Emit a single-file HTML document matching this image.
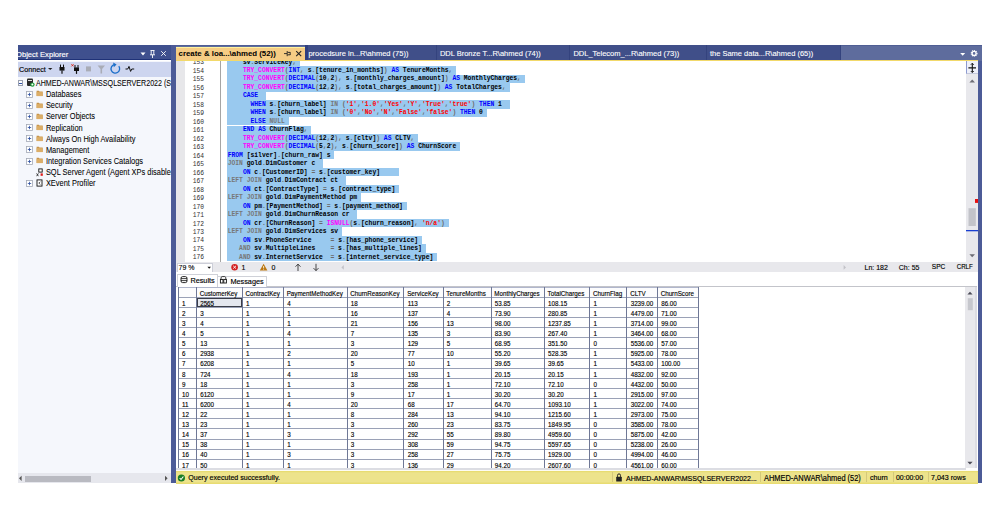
<!DOCTYPE html><html><head><meta charset="utf-8"><style>
*{margin:0;padding:0;box-sizing:border-box}
html,body{width:1000px;height:529px;overflow:hidden;background:#fff;font-family:"Liberation Sans",sans-serif}
.ab{position:absolute}
.t{position:absolute;white-space:pre;line-height:1}
</style></head><body>
<div class="ab" style="left:171px;top:45px;width:811px;height:438.4px;background:#4c5b97"></div>
<div class="ab" style="left:17.6px;top:45px;width:153.6px;height:15.4px;background:#3f508e;overflow:hidden;border-bottom:0.9px solid #1f3278">
<div class="t" style="left:-1.6px;top:6.0px;font-size:7.6px;color:#fff;-webkit-text-stroke:0.15px #fff">Object Explorer</div>
</div>
<svg class="ab" style="left:138px;top:48px" width="34" height="12" viewBox="0 0 34 12"><path d="M2.5 4.5h5l-2.5 3z" fill="#fff"/><path d="M12.5 2.5h4M13.2 2.5v4.2M15.8 2.5v4.2M12 6.8h5M14.5 6.8v3.2" stroke="#fff" stroke-width="0.9" fill="none"/><path d="M23.2 3.2l4.6 4.6M27.8 3.2l-4.6 4.6" stroke="#fff" stroke-width="0.9"/></svg>
<div class="ab" style="left:17.6px;top:60.6px;width:153.6px;height:16.4px;background:#cdd5ef;border-top:1.1px solid #f4f6fc"></div>
<div class="t" style="left:19px;top:66.4px;font-size:7.2px;color:#000;-webkit-text-stroke:0.15px #000">Connect</div>
<svg class="ab" style="left:17.6px;top:60.4px" width="153" height="17" viewBox="0 0 153 17"><path d="M30 7.9h4.4l-2.2 2.1z" fill="#1e1e1e"/><path d="M42.5 4.6v2.6M45.5 4.6v2.6" stroke="#111" stroke-width="1"/><rect x="41.5" y="7" width="5" height="3.6" fill="#111"/><path d="M44 10.5v3.2" stroke="#111" stroke-width="1.2"/><path d="M53.4 4.2l2.2 2.2M55.6 4.2l-2.2 2.2" stroke="#d21" stroke-width="0.9"/><path d="M57 5v2.6M60 5v2.6" stroke="#111" stroke-width="1"/><rect x="56" y="7.4" width="5" height="3.6" fill="#111"/><path d="M58.5 10.9v3" stroke="#111" stroke-width="1.2"/><rect x="68" y="6.4" width="5" height="5" fill="#a9acb6"/><path d="M79.6 5.6h7.4l-2.9 3.4v4.6h-1.6v-4.6z" fill="#a9acb6"/><path d="M96.2 4.6a4.3 4.3 0 1 0 4.6 1.6" stroke="#1c6fc9" stroke-width="1.3" fill="none"/><path d="M95.2 2.6l3.4 2-2.8 2.6z" fill="#1c6fc9"/><path d="M107.5 9h2.3l1.2-2.6 1.6 5 1.2-2.4h2.4" stroke="#111" stroke-width="1" fill="none"/></svg>
<div class="ab" style="left:17.6px;top:77.2px;width:153.6px;height:396px;background:#f5f7fc;overflow:hidden">
<div class="ab" style="left:0.2px;top:3.10px;width:5.4px;height:5.4px;border:0.8px solid #9aa0b0;background:#fff"></div>
<div class="ab" style="left:1.4px;top:5.40px;width:3px;height:0.8px;background:#3355aa"></div>
<svg class="ab" style="left:8px;top:1.20px" width="9" height="9" viewBox="0 0 9 9"><rect x="1" y="0.5" width="6" height="7.5" rx="1" fill="#2a2a2a"/><rect x="2" y="2" width="4" height="1" fill="#ddd"/><circle cx="6.4" cy="6.6" r="2.2" fill="#1a9b3a"/><circle cx="6.4" cy="6.6" r="1" fill="#fff"/></svg>
<div class="t" style="left:18.40px;top:4.30px;font-size:7.12px;color:#000;-webkit-text-stroke:0.05px #000;transform:scaleY(1.15);transform-origin:0 50%">AHMED-ANWAR\MSSQLSERVER2022 (SQL Server 16.0.1000 - AHMED-ANWAR\ahmed)</div>
<svg class="ab" style="left:8.40px;top:13.46px" width="7" height="7" viewBox="0 0 7 7"><rect x="0.5" y="0.5" width="6" height="6" fill="#fff" stroke="#a4a8b6" stroke-width="0.8"/><path d="M1.8 3.5h3.4M3.5 1.8v3.4" stroke="#2c4ea0" stroke-width="0.8"/></svg>
<svg class="ab" style="left:18.40px;top:13.26px" width="8" height="7" viewBox="0 0 8 7"><path d="M0.6 0.8h2.2l0.7 0.7h3.2v4.6h-6.1z" fill="#c8954c"/><rect x="0.6" y="2.1" width="6.1" height="4" fill="#dcae68"/></svg>
<div class="t" style="left:28.30px;top:13.86px;font-size:7.45px;color:#000;-webkit-text-stroke:0.05px #000;transform:scaleY(1.1);transform-origin:0 50%">Databases</div>
<svg class="ab" style="left:8.40px;top:24.62px" width="7" height="7" viewBox="0 0 7 7"><rect x="0.5" y="0.5" width="6" height="6" fill="#fff" stroke="#a4a8b6" stroke-width="0.8"/><path d="M1.8 3.5h3.4M3.5 1.8v3.4" stroke="#2c4ea0" stroke-width="0.8"/></svg>
<svg class="ab" style="left:18.40px;top:24.42px" width="8" height="7" viewBox="0 0 8 7"><path d="M0.6 0.8h2.2l0.7 0.7h3.2v4.6h-6.1z" fill="#c8954c"/><rect x="0.6" y="2.1" width="6.1" height="4" fill="#dcae68"/></svg>
<div class="t" style="left:28.30px;top:25.02px;font-size:7.45px;color:#000;-webkit-text-stroke:0.05px #000;transform:scaleY(1.1);transform-origin:0 50%">Security</div>
<svg class="ab" style="left:8.40px;top:35.78px" width="7" height="7" viewBox="0 0 7 7"><rect x="0.5" y="0.5" width="6" height="6" fill="#fff" stroke="#a4a8b6" stroke-width="0.8"/><path d="M1.8 3.5h3.4M3.5 1.8v3.4" stroke="#2c4ea0" stroke-width="0.8"/></svg>
<svg class="ab" style="left:18.40px;top:35.58px" width="8" height="7" viewBox="0 0 8 7"><path d="M0.6 0.8h2.2l0.7 0.7h3.2v4.6h-6.1z" fill="#c8954c"/><rect x="0.6" y="2.1" width="6.1" height="4" fill="#dcae68"/></svg>
<div class="t" style="left:28.30px;top:36.18px;font-size:7.45px;color:#000;-webkit-text-stroke:0.05px #000;transform:scaleY(1.1);transform-origin:0 50%">Server Objects</div>
<svg class="ab" style="left:8.40px;top:46.94px" width="7" height="7" viewBox="0 0 7 7"><rect x="0.5" y="0.5" width="6" height="6" fill="#fff" stroke="#a4a8b6" stroke-width="0.8"/><path d="M1.8 3.5h3.4M3.5 1.8v3.4" stroke="#2c4ea0" stroke-width="0.8"/></svg>
<svg class="ab" style="left:18.40px;top:46.74px" width="8" height="7" viewBox="0 0 8 7"><path d="M0.6 0.8h2.2l0.7 0.7h3.2v4.6h-6.1z" fill="#c8954c"/><rect x="0.6" y="2.1" width="6.1" height="4" fill="#dcae68"/></svg>
<div class="t" style="left:28.30px;top:47.34px;font-size:7.45px;color:#000;-webkit-text-stroke:0.05px #000;transform:scaleY(1.1);transform-origin:0 50%">Replication</div>
<svg class="ab" style="left:8.40px;top:58.10px" width="7" height="7" viewBox="0 0 7 7"><rect x="0.5" y="0.5" width="6" height="6" fill="#fff" stroke="#a4a8b6" stroke-width="0.8"/><path d="M1.8 3.5h3.4M3.5 1.8v3.4" stroke="#2c4ea0" stroke-width="0.8"/></svg>
<svg class="ab" style="left:18.40px;top:57.90px" width="8" height="7" viewBox="0 0 8 7"><path d="M0.6 0.8h2.2l0.7 0.7h3.2v4.6h-6.1z" fill="#c8954c"/><rect x="0.6" y="2.1" width="6.1" height="4" fill="#dcae68"/></svg>
<div class="t" style="left:28.30px;top:58.50px;font-size:7.45px;color:#000;-webkit-text-stroke:0.05px #000;transform:scaleY(1.1);transform-origin:0 50%">Always On High Availability</div>
<svg class="ab" style="left:8.40px;top:69.26px" width="7" height="7" viewBox="0 0 7 7"><rect x="0.5" y="0.5" width="6" height="6" fill="#fff" stroke="#a4a8b6" stroke-width="0.8"/><path d="M1.8 3.5h3.4M3.5 1.8v3.4" stroke="#2c4ea0" stroke-width="0.8"/></svg>
<svg class="ab" style="left:18.40px;top:69.06px" width="8" height="7" viewBox="0 0 8 7"><path d="M0.6 0.8h2.2l0.7 0.7h3.2v4.6h-6.1z" fill="#c8954c"/><rect x="0.6" y="2.1" width="6.1" height="4" fill="#dcae68"/></svg>
<div class="t" style="left:28.30px;top:69.66px;font-size:7.45px;color:#000;-webkit-text-stroke:0.05px #000;transform:scaleY(1.1);transform-origin:0 50%">Management</div>
<svg class="ab" style="left:8.40px;top:80.42px" width="7" height="7" viewBox="0 0 7 7"><rect x="0.5" y="0.5" width="6" height="6" fill="#fff" stroke="#a4a8b6" stroke-width="0.8"/><path d="M1.8 3.5h3.4M3.5 1.8v3.4" stroke="#2c4ea0" stroke-width="0.8"/></svg>
<svg class="ab" style="left:18.40px;top:80.22px" width="8" height="7" viewBox="0 0 8 7"><path d="M0.6 0.8h2.2l0.7 0.7h3.2v4.6h-6.1z" fill="#c8954c"/><rect x="0.6" y="2.1" width="6.1" height="4" fill="#dcae68"/></svg>
<div class="t" style="left:28.30px;top:80.82px;font-size:7.45px;color:#000;-webkit-text-stroke:0.05px #000;transform:scaleY(1.1);transform-origin:0 50%">Integration Services Catalogs</div>
<svg class="ab" style="left:18.00px;top:90.78px" width="9" height="9" viewBox="0 0 9 9"><rect x="2.8" y="0.9" width="3.4" height="3.2" fill="#fff" stroke="#111" stroke-width="0.9"/><path d="M0.6 5.4l1.8 2.8M2.4 5.4l-1.8 2.8" stroke="#222" stroke-width="0.8"/><rect x="4.6" y="5.4" width="2.2" height="2.4" fill="#e01818"/></svg>
<div class="t" style="left:28.30px;top:91.98px;font-size:7.45px;color:#000;-webkit-text-stroke:0.05px #000;transform:scaleY(1.1);transform-origin:0 50%">SQL Server Agent (Agent XPs disabled)</div>
<svg class="ab" style="left:8.40px;top:102.74px" width="7" height="7" viewBox="0 0 7 7"><rect x="0.5" y="0.5" width="6" height="6" fill="#fff" stroke="#a4a8b6" stroke-width="0.8"/><path d="M1.8 3.5h3.4M3.5 1.8v3.4" stroke="#2c4ea0" stroke-width="0.8"/></svg>
<svg class="ab" style="left:18.00px;top:102.14px" width="9" height="9" viewBox="0 0 9 9"><rect x="1" y="0.9" width="5" height="6.2" fill="#fff" stroke="#111" stroke-width="0.9"/><path d="M4.4 2.8l-1.6 1.3 1.6 1.3" stroke="#222" stroke-width="0.7" fill="none"/></svg>
<div class="t" style="left:28.30px;top:103.14px;font-size:7.45px;color:#000;-webkit-text-stroke:0.05px #000;transform:scaleY(1.1);transform-origin:0 50%">XEvent Profiler</div>
</div>
<div class="ab" style="left:17.6px;top:473.2px;width:153.6px;height:10.3px;background:#e6e7ed"></div>
<div class="ab" style="left:25px;top:475.6px;width:66px;height:6.2px;background:#b9bac1"></div>
<svg class="ab" style="left:17.6px;top:473.2px" width="154" height="11" viewBox="0 0 154 11"><path d="M1 5.3l2.6-2.6v5.2z" fill="#555"/><path d="M149.6 5.3l-2.6-2.6v5.2z" fill="#555"/></svg>
<div class="ab" style="left:176px;top:45px;width:806px;height:15.5px;background:#5e6c9d;border-top:1.4px solid #4f5e94"></div>
<div class="ab" style="left:305px;top:45px;width:131.5px;height:15.5px;background:#404f89;border-right:0.9px solid #34437e"></div>
<div class="t" style="left:308.4px;top:50.0px;font-size:7.5px;color:#fff;-webkit-text-stroke:0.1px #fff">procedsure in...R\ahmed (75))</div>
<div class="ab" style="left:436.5px;top:45px;width:133.5px;height:15.5px;background:#404f89;border-right:0.9px solid #34437e"></div>
<div class="t" style="left:439.9px;top:50.0px;font-size:7.5px;color:#fff;-webkit-text-stroke:0.1px #fff">DDL Bronze T...R\ahmed (74))</div>
<div class="ab" style="left:570px;top:45px;width:136.5px;height:15.5px;background:#404f89;border-right:0.9px solid #34437e"></div>
<div class="t" style="left:573.4px;top:50.0px;font-size:7.5px;color:#fff;-webkit-text-stroke:0.1px #fff">DDL_Telecom_...R\ahmed (73))</div>
<div class="ab" style="left:706.5px;top:45px;width:134.5px;height:15.5px;background:#404f89;border-right:0.9px solid #34437e"></div>
<div class="t" style="left:709.9px;top:50.0px;font-size:7.5px;color:#fff;-webkit-text-stroke:0.1px #fff">the Same data...R\ahmed (65))</div>
<div class="ab" style="left:176px;top:46.5px;width:129px;height:14.5px;background:#f5cc84;border-top:1.2px solid #fff29d"></div>
<div class="t" style="left:178.6px;top:49.8px;font-size:7.85px;font-weight:bold;color:#000">create &amp; loa...\ahmed (52))</div>
<svg class="ab" style="left:282px;top:48px" width="22" height="11" viewBox="0 0 22 11"><path d="M2 5.6h3M5.2 3v5.2M5.6 4.4h2.6M5.6 6.8h2.6M8.2 4.2v2.8" stroke="#222" stroke-width="0.9" fill="none"/><path d="M14.2 3.2l5 5M19.2 3.2l-5 5" stroke="#222" stroke-width="1.1"/></svg>
<div class="ab" style="left:305.4px;top:45px;width:2.4px;height:15px;background:#2f3f7e"></div>
<svg class="ab" style="left:958px;top:48px" width="22" height="11" viewBox="0 0 22 11"><path d="M2.2 5h5l-2.5 2.8z" fill="#fff"/><circle cx="16.1" cy="5.4" r="2" fill="none" stroke="#fff" stroke-width="1.3"/><circle cx="16.1" cy="5.4" r="2.9" fill="none" stroke="#fff" stroke-width="1.1" stroke-dasharray="1 0.9"/></svg>
<div class="ab" style="left:176px;top:60.5px;width:802px;height:201.5px;background:#fff;overflow:hidden">
<div class="ab" style="left:0;top:0;width:9px;height:202px;background:#e7e7ea"></div>
<div class="ab" style="left:44px;top:0;width:0.8px;height:202px;background:#a5a5a5"></div>
</div>
<div class="ab" style="left:176px;top:59.6px;width:802px;height:0.8px;background:#2d4a9e"></div>
<div class="ab" style="left:176px;top:60.3px;width:802px;height:1.1px;background:#f2d96a"></div>
<div class="ab" style="left:176px;top:61px;width:790px;height:201px;overflow:hidden">
<div class="ab" style="left:51.00px;top:-3.34px;width:73.05px;height:8.48px;background:#99c9ef"></div>
<div class="t" style="left:8.00px;width:20px;text-align:right;top:-0.60px;font-family:'Liberation Mono', monospace;font-size:6.27px;color:#2e2e2e">153</div>
<div class="t" style="left:51.66px;top:-1.50px;font-family:'Liberation Mono', monospace;font-size:6.35px;letter-spacing:0.000px;font-weight:bold">    <span style="color:#000000">sv</span><span style="color:#6a6a6a">.</span><span style="color:#000000">ServiceKey</span><span style="color:#6a6a6a">,</span></div>
<div class="ab" style="left:51.00px;top:5.14px;width:229.26px;height:8.48px;background:#99c9ef"></div>
<div class="t" style="left:8.00px;width:20px;text-align:right;top:7.88px;font-family:'Liberation Mono', monospace;font-size:6.27px;color:#2e2e2e">154</div>
<div class="t" style="left:51.66px;top:6.98px;font-family:'Liberation Mono', monospace;font-size:6.35px;letter-spacing:0.000px;font-weight:bold">    <span style="color:#ff00ff">TRY_CONVERT</span><span style="color:#6a6a6a">(</span><span style="color:#0000ff">INT</span><span style="color:#6a6a6a">,</span> <span style="color:#000000">s</span><span style="color:#6a6a6a">.</span><span style="color:#000000">[tenure_in_months]</span><span style="color:#6a6a6a">)</span> <span style="color:#0000ff">AS</span> <span style="color:#000000">TenureMonths</span><span style="color:#6a6a6a">,</span></div>
<div class="ab" style="left:51.00px;top:13.62px;width:297.84px;height:8.48px;background:#99c9ef"></div>
<div class="t" style="left:8.00px;width:20px;text-align:right;top:16.36px;font-family:'Liberation Mono', monospace;font-size:6.27px;color:#2e2e2e">155</div>
<div class="t" style="left:51.66px;top:15.46px;font-family:'Liberation Mono', monospace;font-size:6.35px;letter-spacing:0.000px;font-weight:bold">    <span style="color:#ff00ff">TRY_CONVERT</span><span style="color:#6a6a6a">(</span><span style="color:#0000ff">DECIMAL</span><span style="color:#6a6a6a">(</span><span style="color:#000000">10</span><span style="color:#6a6a6a">,</span><span style="color:#000000">2</span><span style="color:#6a6a6a">)</span><span style="color:#6a6a6a">,</span> <span style="color:#000000">s</span><span style="color:#6a6a6a">.</span><span style="color:#000000">[monthly_charges_amount]</span><span style="color:#6a6a6a">)</span> <span style="color:#0000ff">AS</span> <span style="color:#000000">MonthlyCharges</span><span style="color:#6a6a6a">,</span></div>
<div class="ab" style="left:51.00px;top:22.10px;width:282.60px;height:8.48px;background:#99c9ef"></div>
<div class="t" style="left:8.00px;width:20px;text-align:right;top:24.84px;font-family:'Liberation Mono', monospace;font-size:6.27px;color:#2e2e2e">156</div>
<div class="t" style="left:51.66px;top:23.94px;font-family:'Liberation Mono', monospace;font-size:6.35px;letter-spacing:0.000px;font-weight:bold">    <span style="color:#ff00ff">TRY_CONVERT</span><span style="color:#6a6a6a">(</span><span style="color:#0000ff">DECIMAL</span><span style="color:#6a6a6a">(</span><span style="color:#000000">12</span><span style="color:#6a6a6a">,</span><span style="color:#000000">2</span><span style="color:#6a6a6a">)</span><span style="color:#6a6a6a">,</span> <span style="color:#000000">s</span><span style="color:#6a6a6a">.</span><span style="color:#000000">[total_charges_amount]</span><span style="color:#6a6a6a">)</span> <span style="color:#0000ff">AS</span> <span style="color:#000000">TotalCharges</span><span style="color:#6a6a6a">,</span></div>
<div class="ab" style="left:51.00px;top:30.58px;width:38.76px;height:8.48px;background:#99c9ef"></div>
<div class="t" style="left:8.00px;width:20px;text-align:right;top:33.32px;font-family:'Liberation Mono', monospace;font-size:6.27px;color:#2e2e2e">157</div>
<div class="t" style="left:51.66px;top:32.42px;font-family:'Liberation Mono', monospace;font-size:6.35px;letter-spacing:0.000px;font-weight:bold">    <span style="color:#0000ff">CASE</span></div>
<div class="ab" style="left:51.00px;top:39.06px;width:282.60px;height:8.48px;background:#99c9ef"></div>
<div class="t" style="left:8.00px;width:20px;text-align:right;top:41.80px;font-family:'Liberation Mono', monospace;font-size:6.27px;color:#2e2e2e">158</div>
<div class="t" style="left:51.66px;top:40.90px;font-family:'Liberation Mono', monospace;font-size:6.35px;letter-spacing:0.000px;font-weight:bold">      <span style="color:#0000ff">WHEN</span> <span style="color:#000000">s</span><span style="color:#6a6a6a">.</span><span style="color:#000000">[churn_label]</span> <span style="color:#777777">IN</span> <span style="color:#6a6a6a">(</span><span style="color:#ff0000">&#x27;1&#x27;</span><span style="color:#6a6a6a">,</span><span style="color:#ff0000">&#x27;1.0&#x27;</span><span style="color:#6a6a6a">,</span><span style="color:#ff0000">&#x27;Yes&#x27;</span><span style="color:#6a6a6a">,</span><span style="color:#ff0000">&#x27;Y&#x27;</span><span style="color:#6a6a6a">,</span><span style="color:#ff0000">&#x27;True&#x27;</span><span style="color:#6a6a6a">,</span><span style="color:#ff0000">&#x27;true&#x27;</span><span style="color:#6a6a6a">)</span> <span style="color:#0000ff">THEN</span> <span style="color:#000000">1</span></div>
<div class="ab" style="left:51.00px;top:47.54px;width:259.74px;height:8.48px;background:#99c9ef"></div>
<div class="t" style="left:8.00px;width:20px;text-align:right;top:50.28px;font-family:'Liberation Mono', monospace;font-size:6.27px;color:#2e2e2e">159</div>
<div class="t" style="left:51.66px;top:49.38px;font-family:'Liberation Mono', monospace;font-size:6.35px;letter-spacing:0.000px;font-weight:bold">      <span style="color:#0000ff">WHEN</span> <span style="color:#000000">s</span><span style="color:#6a6a6a">.</span><span style="color:#000000">[churn_label]</span> <span style="color:#777777">IN</span> <span style="color:#6a6a6a">(</span><span style="color:#ff0000">&#x27;0&#x27;</span><span style="color:#6a6a6a">,</span><span style="color:#ff0000">&#x27;No&#x27;</span><span style="color:#6a6a6a">,</span><span style="color:#ff0000">&#x27;N&#x27;</span><span style="color:#6a6a6a">,</span><span style="color:#ff0000">&#x27;False&#x27;</span><span style="color:#6a6a6a">,</span><span style="color:#ff0000">&#x27;false&#x27;</span><span style="color:#6a6a6a">)</span> <span style="color:#0000ff">THEN</span> <span style="color:#000000">0</span></div>
<div class="ab" style="left:51.00px;top:56.02px;width:61.62px;height:8.48px;background:#99c9ef"></div>
<div class="t" style="left:8.00px;width:20px;text-align:right;top:58.76px;font-family:'Liberation Mono', monospace;font-size:6.27px;color:#2e2e2e">160</div>
<div class="t" style="left:51.66px;top:57.86px;font-family:'Liberation Mono', monospace;font-size:6.35px;letter-spacing:0.000px;font-weight:bold">      <span style="color:#0000ff">ELSE</span> <span style="color:#777777">NULL</span></div>
<div class="ab" style="left:51.00px;top:64.50px;width:84.48px;height:8.48px;background:#99c9ef"></div>
<div class="t" style="left:8.00px;width:20px;text-align:right;top:67.24px;font-family:'Liberation Mono', monospace;font-size:6.27px;color:#2e2e2e">161</div>
<div class="t" style="left:51.66px;top:66.34px;font-family:'Liberation Mono', monospace;font-size:6.35px;letter-spacing:0.000px;font-weight:bold">    <span style="color:#0000ff">END</span> <span style="color:#0000ff">AS</span> <span style="color:#000000">ChurnFlag</span><span style="color:#6a6a6a">,</span></div>
<div class="ab" style="left:51.00px;top:72.98px;width:191.16px;height:8.48px;background:#99c9ef"></div>
<div class="t" style="left:8.00px;width:20px;text-align:right;top:75.72px;font-family:'Liberation Mono', monospace;font-size:6.27px;color:#2e2e2e">162</div>
<div class="t" style="left:51.66px;top:74.82px;font-family:'Liberation Mono', monospace;font-size:6.35px;letter-spacing:0.000px;font-weight:bold">    <span style="color:#ff00ff">TRY_CONVERT</span><span style="color:#6a6a6a">(</span><span style="color:#0000ff">DECIMAL</span><span style="color:#6a6a6a">(</span><span style="color:#000000">12</span><span style="color:#6a6a6a">,</span><span style="color:#000000">2</span><span style="color:#6a6a6a">)</span><span style="color:#6a6a6a">,</span> <span style="color:#000000">s</span><span style="color:#6a6a6a">.</span><span style="color:#000000">[cltv]</span><span style="color:#6a6a6a">)</span> <span style="color:#0000ff">AS</span> <span style="color:#000000">CLTV</span><span style="color:#6a6a6a">,</span></div>
<div class="ab" style="left:51.00px;top:81.46px;width:233.07px;height:8.48px;background:#99c9ef"></div>
<div class="t" style="left:8.00px;width:20px;text-align:right;top:84.20px;font-family:'Liberation Mono', monospace;font-size:6.27px;color:#2e2e2e">163</div>
<div class="t" style="left:51.66px;top:83.30px;font-family:'Liberation Mono', monospace;font-size:6.35px;letter-spacing:0.000px;font-weight:bold">    <span style="color:#ff00ff">TRY_CONVERT</span><span style="color:#6a6a6a">(</span><span style="color:#0000ff">DECIMAL</span><span style="color:#6a6a6a">(</span><span style="color:#000000">5</span><span style="color:#6a6a6a">,</span><span style="color:#000000">2</span><span style="color:#6a6a6a">)</span><span style="color:#6a6a6a">,</span> <span style="color:#000000">s</span><span style="color:#6a6a6a">.</span><span style="color:#000000">[churn_score]</span><span style="color:#6a6a6a">)</span> <span style="color:#0000ff">AS</span> <span style="color:#000000">ChurnScore</span></div>
<div class="ab" style="left:51.00px;top:89.94px;width:107.34px;height:8.48px;background:#99c9ef"></div>
<div class="t" style="left:8.00px;width:20px;text-align:right;top:92.68px;font-family:'Liberation Mono', monospace;font-size:6.27px;color:#2e2e2e">164</div>
<div class="t" style="left:51.66px;top:91.78px;font-family:'Liberation Mono', monospace;font-size:6.35px;letter-spacing:0.000px;font-weight:bold"><span style="color:#0000ff">FROM</span> <span style="color:#000000">[silver]</span><span style="color:#6a6a6a">.</span><span style="color:#000000">[churn_raw]</span> <span style="color:#000000">s</span></div>
<div class="ab" style="left:51.00px;top:98.42px;width:95.91px;height:8.48px;background:#99c9ef"></div>
<div class="t" style="left:8.00px;width:20px;text-align:right;top:101.16px;font-family:'Liberation Mono', monospace;font-size:6.27px;color:#2e2e2e">165</div>
<div class="t" style="left:51.66px;top:100.26px;font-family:'Liberation Mono', monospace;font-size:6.35px;letter-spacing:0.000px;font-weight:bold"><span style="color:#777777">JOIN</span> <span style="color:#000000">gold</span><span style="color:#6a6a6a">.</span><span style="color:#000000">DimCustomer</span> <span style="color:#000000">c</span></div>
<div class="ab" style="left:51.00px;top:106.90px;width:172.11px;height:8.48px;background:#99c9ef"></div>
<div class="t" style="left:8.00px;width:20px;text-align:right;top:109.64px;font-family:'Liberation Mono', monospace;font-size:6.27px;color:#2e2e2e">166</div>
<div class="t" style="left:51.66px;top:108.74px;font-family:'Liberation Mono', monospace;font-size:6.35px;letter-spacing:0.000px;font-weight:bold">    <span style="color:#0000ff">ON</span> <span style="color:#000000">c</span><span style="color:#6a6a6a">.</span><span style="color:#000000">[CustomerID]</span> <span style="color:#6a6a6a">=</span> <span style="color:#000000">s</span><span style="color:#6a6a6a">.</span><span style="color:#000000">[customer_key]</span></div>
<div class="ab" style="left:51.00px;top:115.38px;width:118.77px;height:8.48px;background:#99c9ef"></div>
<div class="t" style="left:8.00px;width:20px;text-align:right;top:118.12px;font-family:'Liberation Mono', monospace;font-size:6.27px;color:#2e2e2e">167</div>
<div class="t" style="left:51.66px;top:117.22px;font-family:'Liberation Mono', monospace;font-size:6.35px;letter-spacing:0.000px;font-weight:bold"><span style="color:#777777">LEFT</span> <span style="color:#777777">JOIN</span> <span style="color:#000000">gold</span><span style="color:#6a6a6a">.</span><span style="color:#000000">DimContract</span> <span style="color:#000000">ct</span></div>
<div class="ab" style="left:51.00px;top:123.86px;width:172.11px;height:8.48px;background:#99c9ef"></div>
<div class="t" style="left:8.00px;width:20px;text-align:right;top:126.60px;font-family:'Liberation Mono', monospace;font-size:6.27px;color:#2e2e2e">168</div>
<div class="t" style="left:51.66px;top:125.70px;font-family:'Liberation Mono', monospace;font-size:6.35px;letter-spacing:0.000px;font-weight:bold">    <span style="color:#0000ff">ON</span> <span style="color:#000000">ct</span><span style="color:#6a6a6a">.</span><span style="color:#000000">[ContractType]</span> <span style="color:#6a6a6a">=</span> <span style="color:#000000">s</span><span style="color:#6a6a6a">.</span><span style="color:#000000">[contract_type]</span></div>
<div class="ab" style="left:51.00px;top:132.34px;width:134.01px;height:8.48px;background:#99c9ef"></div>
<div class="t" style="left:8.00px;width:20px;text-align:right;top:135.08px;font-family:'Liberation Mono', monospace;font-size:6.27px;color:#2e2e2e">169</div>
<div class="t" style="left:51.66px;top:134.18px;font-family:'Liberation Mono', monospace;font-size:6.35px;letter-spacing:0.000px;font-weight:bold"><span style="color:#777777">LEFT</span> <span style="color:#777777">JOIN</span> <span style="color:#000000">gold</span><span style="color:#6a6a6a">.</span><span style="color:#000000">DimPaymentMethod</span> <span style="color:#000000">pm</span></div>
<div class="ab" style="left:51.00px;top:140.82px;width:179.73px;height:8.48px;background:#99c9ef"></div>
<div class="t" style="left:8.00px;width:20px;text-align:right;top:143.56px;font-family:'Liberation Mono', monospace;font-size:6.27px;color:#2e2e2e">170</div>
<div class="t" style="left:51.66px;top:142.66px;font-family:'Liberation Mono', monospace;font-size:6.35px;letter-spacing:0.000px;font-weight:bold">    <span style="color:#0000ff">ON</span> <span style="color:#000000">pm</span><span style="color:#6a6a6a">.</span><span style="color:#000000">[PaymentMethod]</span> <span style="color:#6a6a6a">=</span> <span style="color:#000000">s</span><span style="color:#6a6a6a">.</span><span style="color:#000000">[payment_method]</span></div>
<div class="ab" style="left:51.00px;top:149.30px;width:130.20px;height:8.48px;background:#99c9ef"></div>
<div class="t" style="left:8.00px;width:20px;text-align:right;top:152.04px;font-family:'Liberation Mono', monospace;font-size:6.27px;color:#2e2e2e">171</div>
<div class="t" style="left:51.66px;top:151.14px;font-family:'Liberation Mono', monospace;font-size:6.35px;letter-spacing:0.000px;font-weight:bold"><span style="color:#777777">LEFT</span> <span style="color:#777777">JOIN</span> <span style="color:#000000">gold</span><span style="color:#6a6a6a">.</span><span style="color:#000000">DimChurnReason</span> <span style="color:#000000">cr</span></div>
<div class="ab" style="left:51.00px;top:157.78px;width:221.64px;height:8.48px;background:#99c9ef"></div>
<div class="t" style="left:8.00px;width:20px;text-align:right;top:160.52px;font-family:'Liberation Mono', monospace;font-size:6.27px;color:#2e2e2e">172</div>
<div class="t" style="left:51.66px;top:159.62px;font-family:'Liberation Mono', monospace;font-size:6.35px;letter-spacing:0.000px;font-weight:bold">    <span style="color:#0000ff">ON</span> <span style="color:#000000">cr</span><span style="color:#6a6a6a">.</span><span style="color:#000000">[ChurnReason]</span> <span style="color:#6a6a6a">=</span> <span style="color:#ff00ff">ISNULL</span><span style="color:#6a6a6a">(</span><span style="color:#000000">s</span><span style="color:#6a6a6a">.</span><span style="color:#000000">[churn_reason]</span><span style="color:#6a6a6a">,</span> <span style="color:#ff0000">&#x27;n/a&#x27;</span><span style="color:#6a6a6a">)</span></div>
<div class="ab" style="left:51.00px;top:166.26px;width:114.96px;height:8.48px;background:#99c9ef"></div>
<div class="t" style="left:8.00px;width:20px;text-align:right;top:169.00px;font-family:'Liberation Mono', monospace;font-size:6.27px;color:#2e2e2e">173</div>
<div class="t" style="left:51.66px;top:168.10px;font-family:'Liberation Mono', monospace;font-size:6.35px;letter-spacing:0.000px;font-weight:bold"><span style="color:#777777">LEFT</span> <span style="color:#777777">JOIN</span> <span style="color:#000000">gold</span><span style="color:#6a6a6a">.</span><span style="color:#000000">DimServices</span> <span style="color:#000000">sv</span></div>
<div class="ab" style="left:51.00px;top:174.74px;width:194.97px;height:8.48px;background:#99c9ef"></div>
<div class="t" style="left:8.00px;width:20px;text-align:right;top:177.48px;font-family:'Liberation Mono', monospace;font-size:6.27px;color:#2e2e2e">174</div>
<div class="t" style="left:51.66px;top:176.58px;font-family:'Liberation Mono', monospace;font-size:6.35px;letter-spacing:0.000px;font-weight:bold">    <span style="color:#0000ff">ON</span> <span style="color:#000000">sv</span><span style="color:#6a6a6a">.</span><span style="color:#000000">PhoneService</span>     <span style="color:#6a6a6a">=</span> <span style="color:#000000">s</span><span style="color:#6a6a6a">.</span><span style="color:#000000">[has_phone_service]</span></div>
<div class="ab" style="left:51.00px;top:183.22px;width:198.78px;height:8.48px;background:#99c9ef"></div>
<div class="t" style="left:8.00px;width:20px;text-align:right;top:185.96px;font-family:'Liberation Mono', monospace;font-size:6.27px;color:#2e2e2e">175</div>
<div class="t" style="left:51.66px;top:185.06px;font-family:'Liberation Mono', monospace;font-size:6.35px;letter-spacing:0.000px;font-weight:bold">   <span style="color:#777777">AND</span> <span style="color:#000000">sv</span><span style="color:#6a6a6a">.</span><span style="color:#000000">MultipleLines</span>    <span style="color:#6a6a6a">=</span> <span style="color:#000000">s</span><span style="color:#6a6a6a">.</span><span style="color:#000000">[has_multiple_lines]</span></div>
<div class="ab" style="left:51.00px;top:191.70px;width:210.21px;height:8.48px;background:#99c9ef"></div>
<div class="t" style="left:8.00px;width:20px;text-align:right;top:194.44px;font-family:'Liberation Mono', monospace;font-size:6.27px;color:#2e2e2e">176</div>
<div class="t" style="left:51.66px;top:193.54px;font-family:'Liberation Mono', monospace;font-size:6.35px;letter-spacing:0.000px;font-weight:bold">   <span style="color:#777777">AND</span> <span style="color:#000000">sv</span><span style="color:#6a6a6a">.</span><span style="color:#000000">InternetService</span>  <span style="color:#6a6a6a">=</span> <span style="color:#000000">s</span><span style="color:#6a6a6a">.</span><span style="color:#000000">[internet_service_type]</span></div>
</div>
<div class="ab" style="left:966px;top:61px;width:12px;height:201px;background:#e8e8ec"></div>
<div class="ab" style="left:966.4px;top:61px;width:11.6px;height:13.3px;background:#eef0fa;border-left:0.9px solid #8d9bd0;border-bottom:0.8px solid #c5c9dc"></div>
<svg class="ab" style="left:966px;top:61px" width="12" height="201" viewBox="0 0 12 201"><path d="M6.3 2.6v8.6M2.4 6.9h7.6" stroke="#111" stroke-width="1.1"/><path d="M4.8 3.8l1.5-1.6 1.5 1.6M4.8 10l1.5 1.6 1.5-1.6" stroke="#111" stroke-width="0.9" fill="none"/><path d="M3.4 21.6h5.6l-2.8-3z" fill="#6d6d75"/><path d="M3.4 193.2h5.6l-2.8 3z" fill="#6d6d75"/><rect x="2.5" y="147.2" width="7.3" height="17.8" fill="#c2c3c9"/><rect x="9" y="138" width="3" height="3.9" fill="#e81010"/><rect x="0" y="169" width="12" height="1.3" fill="#1a3fd0"/></svg>
<div class="ab" style="left:176px;top:261.5px;width:802px;height:10.4px;background:#e8e8ec"></div>
<div class="ab" style="left:177px;top:262.6px;width:36px;height:10px;background:#fff;border:0.8px solid #ccced8"></div>
<div class="t" style="left:178.5px;top:263.6px;font-size:7px;color:#000;-webkit-text-stroke:0.12px #000">79 %</div>
<svg class="ab" style="left:176px;top:262px" width="802" height="11" viewBox="0 0 802 11"><path d="M31.4 4.8h3.6l-1.8 2z" fill="#111"/><circle cx="58.6" cy="5.2" r="3.3" fill="#d32222"/><path d="M57.2 3.8l2.8 2.8M60 3.8l-2.8 2.8" stroke="#fff" stroke-width="0.9"/><path d="M87.6 1.8l3.8 6.8h-7.6z" fill="#bb7812"/><path d="M87.6 4v2.4M87.6 7.2v.6" stroke="#fff" stroke-width="0.8"/><path d="M122 9V2.2M119.5 4.7L122 2.2l2.5 2.5" stroke="#111" stroke-width="0.75" fill="none"/><path d="M140 1.8v6.8M137.5 6.1L140 8.6l2.5-2.5" stroke="#111" stroke-width="0.75" fill="none"/><path d="M165.4 5.4l2.4-2.4v4.8z" fill="#c2c2c8"/><path d="M670 5.4l-2.4-2.4v4.8z" fill="#c2c2c8"/></svg>
<div class="t" style="left:241.6px;top:263.8px;font-size:7px;color:#000;-webkit-text-stroke:0.12px #000">1</div>
<div class="t" style="left:271.4px;top:263.8px;font-size:7px;color:#000;-webkit-text-stroke:0.12px #000">0</div>
<div class="t" style="left:864.5px;top:263.8px;font-size:7px;color:#000;-webkit-text-stroke:0.12px #000;transform:scaleY(1.08);transform-origin:0 50%">Ln: 182</div>
<div class="t" style="left:898.8px;top:263.8px;font-size:7px;color:#000;-webkit-text-stroke:0.12px #000;transform:scaleY(1.08);transform-origin:0 50%">Ch: 55</div>
<div class="t" style="left:931.8px;top:263.8px;font-size:6.6px;color:#000;-webkit-text-stroke:0.12px #000;transform:scaleY(1.08);transform-origin:0 50%">SPC</div>
<div class="t" style="left:956.7px;top:263.8px;font-size:6.2px;color:#000;-webkit-text-stroke:0.12px #000;transform:scaleY(1.08);transform-origin:0 50%">CRLF</div>
<div class="ab" style="left:176px;top:271.6px;width:802px;height:198.4px;background:#fff"></div>
<div class="ab" style="left:176px;top:286.1px;width:801px;height:1.3px;background:#c3c4ca"></div>
<div class="ab" style="left:217.3px;top:275.5px;width:49.3px;height:11px;background:#fff;border:0.8px solid #cfd1d8;border-bottom:none"></div>
<div class="ab" style="left:177px;top:274.4px;width:40.6px;height:13px;background:#fff;border:0.8px solid #cfd1d8;border-bottom:none"></div>
<svg class="ab" style="left:176px;top:270px" width="100" height="20" viewBox="0 0 100 20"><rect x="5" y="6.6" width="6" height="6" rx="1.6" fill="none" stroke="#111" stroke-width="0.9"/><path d="M5 8.6h6M5 10.6h6" stroke="#111" stroke-width="0.8"/><rect x="44.4" y="9.4" width="2.6" height="3.6" fill="none" stroke="#111" stroke-width="0.9"/><rect x="47.8" y="9.4" width="2.6" height="3.6" fill="none" stroke="#111" stroke-width="0.9"/><path d="M45 9.4V7.4l1.2-0.8h2.6l1 0.8v2" stroke="#111" stroke-width="0.8" fill="none"/></svg>
<div class="t" style="left:190.4px;top:277.0px;font-size:7.3px;color:#000;-webkit-text-stroke:0.15px #000">Results</div>
<div class="t" style="left:230.4px;top:278.0px;font-size:7.3px;color:#000;-webkit-text-stroke:0.15px #000">Messages</div>
<div class="ab" style="left:176px;top:287px;width:790px;height:183px;overflow:hidden">
<div class="ab" style="left:2.1999999999999886px;top:0;width:520.7px;height:10.4px;background:#fcfcfd"></div>
<div class="ab" style="left:2.20px;top:9.90px;width:520.70px;height:1px;background:#9aa1b6"></div>
<div class="ab" style="left:2.20px;top:20.02px;width:520.70px;height:1px;background:#9aa1b6"></div>
<div class="ab" style="left:2.20px;top:30.14px;width:520.70px;height:1px;background:#9aa1b6"></div>
<div class="ab" style="left:2.20px;top:40.26px;width:520.70px;height:1px;background:#9aa1b6"></div>
<div class="ab" style="left:2.20px;top:50.38px;width:520.70px;height:1px;background:#9aa1b6"></div>
<div class="ab" style="left:2.20px;top:60.50px;width:520.70px;height:1px;background:#9aa1b6"></div>
<div class="ab" style="left:2.20px;top:70.62px;width:520.70px;height:1px;background:#9aa1b6"></div>
<div class="ab" style="left:2.20px;top:80.74px;width:520.70px;height:1px;background:#9aa1b6"></div>
<div class="ab" style="left:2.20px;top:90.86px;width:520.70px;height:1px;background:#9aa1b6"></div>
<div class="ab" style="left:2.20px;top:100.98px;width:520.70px;height:1px;background:#9aa1b6"></div>
<div class="ab" style="left:2.20px;top:111.10px;width:520.70px;height:1px;background:#9aa1b6"></div>
<div class="ab" style="left:2.20px;top:121.22px;width:520.70px;height:1px;background:#9aa1b6"></div>
<div class="ab" style="left:2.20px;top:131.34px;width:520.70px;height:1px;background:#9aa1b6"></div>
<div class="ab" style="left:2.20px;top:141.46px;width:520.70px;height:1px;background:#9aa1b6"></div>
<div class="ab" style="left:2.20px;top:151.58px;width:520.70px;height:1px;background:#9aa1b6"></div>
<div class="ab" style="left:2.20px;top:161.70px;width:520.70px;height:1px;background:#9aa1b6"></div>
<div class="ab" style="left:2.20px;top:171.82px;width:520.70px;height:1px;background:#9aa1b6"></div>
<div class="ab" style="left:2.20px;top:181.94px;width:520.70px;height:1px;background:#9aa1b6"></div>
<div class="ab" style="left:2.20px;top:0px;width:520.70px;height:0.8px;background:#b0b6cc"></div>
<div class="ab" style="left:1.70px;top:0;width:1px;height:183px;background:#6f7896"></div>
<div class="ab" style="left:19.90px;top:0;width:1px;height:183px;background:#6f7896"></div>
<div class="ab" style="left:65.80px;top:0;width:1px;height:183px;background:#6f7896"></div>
<div class="ab" style="left:106.90px;top:0;width:1px;height:183px;background:#6f7896"></div>
<div class="ab" style="left:170.50px;top:0;width:1px;height:183px;background:#6f7896"></div>
<div class="ab" style="left:227.40px;top:0;width:1px;height:183px;background:#6f7896"></div>
<div class="ab" style="left:266.50px;top:0;width:1px;height:183px;background:#6f7896"></div>
<div class="ab" style="left:314.50px;top:0;width:1px;height:183px;background:#6f7896"></div>
<div class="ab" style="left:367.80px;top:0;width:1px;height:183px;background:#6f7896"></div>
<div class="ab" style="left:413.20px;top:0;width:1px;height:183px;background:#6f7896"></div>
<div class="ab" style="left:450.40px;top:0;width:1px;height:183px;background:#6f7896"></div>
<div class="ab" style="left:480.90px;top:0;width:1px;height:183px;background:#6f7896"></div>
<div class="ab" style="left:522.40px;top:0;width:1px;height:183px;background:#6f7896"></div>
<div class="ab" style="left:20.70px;top:10.60px;width:45.30px;height:9.82px;background:#e4e7ee;border:1px solid #3a3d48"></div>
<div class="t" style="left:23.70px;top:3.60px;font-size:6.24px;color:#000;-webkit-text-stroke:0.12px #000;transform:scaleY(1.2);transform-origin:0 50%">CustomerKey</div>
<div class="t" style="left:69.60px;top:3.60px;font-size:6.24px;color:#000;-webkit-text-stroke:0.12px #000;transform:scaleY(1.2);transform-origin:0 50%">ContractKey</div>
<div class="t" style="left:110.70px;top:3.60px;font-size:6.24px;color:#000;-webkit-text-stroke:0.12px #000;transform:scaleY(1.2);transform-origin:0 50%">PaymentMethodKey</div>
<div class="t" style="left:174.30px;top:3.60px;font-size:6.24px;color:#000;-webkit-text-stroke:0.12px #000;transform:scaleY(1.2);transform-origin:0 50%">ChurnReasonKey</div>
<div class="t" style="left:231.20px;top:3.60px;font-size:6.24px;color:#000;-webkit-text-stroke:0.12px #000;transform:scaleY(1.2);transform-origin:0 50%">ServiceKey</div>
<div class="t" style="left:270.30px;top:3.60px;font-size:6.24px;color:#000;-webkit-text-stroke:0.12px #000;transform:scaleY(1.2);transform-origin:0 50%">TenureMonths</div>
<div class="t" style="left:318.30px;top:3.60px;font-size:6.24px;color:#000;-webkit-text-stroke:0.12px #000;transform:scaleY(1.2);transform-origin:0 50%">MonthlyCharges</div>
<div class="t" style="left:371.60px;top:3.60px;font-size:6.24px;color:#000;-webkit-text-stroke:0.12px #000;transform:scaleY(1.2);transform-origin:0 50%">TotalCharges</div>
<div class="t" style="left:417.00px;top:3.60px;font-size:6.24px;color:#000;-webkit-text-stroke:0.12px #000;transform:scaleY(1.2);transform-origin:0 50%">ChurnFlag</div>
<div class="t" style="left:454.20px;top:3.60px;font-size:6.24px;color:#000;-webkit-text-stroke:0.12px #000;transform:scaleY(1.2);transform-origin:0 50%">CLTV</div>
<div class="t" style="left:484.70px;top:3.60px;font-size:6.24px;color:#000;-webkit-text-stroke:0.12px #000;transform:scaleY(1.2);transform-origin:0 50%">ChurnScore</div>
<div class="t" style="left:6.00px;top:13.66px;font-size:6.24px;color:#000;-webkit-text-stroke:0.12px #000;transform:scaleY(1.2);transform-origin:0 50%">1</div>
<div class="t" style="left:24.20px;top:13.66px;font-size:6.24px;color:#000;-webkit-text-stroke:0.12px #000;transform:scaleY(1.2);transform-origin:0 50%">2565</div>
<div class="t" style="left:70.10px;top:13.66px;font-size:6.24px;color:#000;-webkit-text-stroke:0.12px #000;transform:scaleY(1.2);transform-origin:0 50%">1</div>
<div class="t" style="left:111.20px;top:13.66px;font-size:6.24px;color:#000;-webkit-text-stroke:0.12px #000;transform:scaleY(1.2);transform-origin:0 50%">4</div>
<div class="t" style="left:174.80px;top:13.66px;font-size:6.24px;color:#000;-webkit-text-stroke:0.12px #000;transform:scaleY(1.2);transform-origin:0 50%">18</div>
<div class="t" style="left:231.70px;top:13.66px;font-size:6.24px;color:#000;-webkit-text-stroke:0.12px #000;transform:scaleY(1.2);transform-origin:0 50%">113</div>
<div class="t" style="left:270.80px;top:13.66px;font-size:6.24px;color:#000;-webkit-text-stroke:0.12px #000;transform:scaleY(1.2);transform-origin:0 50%">2</div>
<div class="t" style="left:318.80px;top:13.66px;font-size:6.24px;color:#000;-webkit-text-stroke:0.12px #000;transform:scaleY(1.2);transform-origin:0 50%">53.85</div>
<div class="t" style="left:372.10px;top:13.66px;font-size:6.24px;color:#000;-webkit-text-stroke:0.12px #000;transform:scaleY(1.2);transform-origin:0 50%">108.15</div>
<div class="t" style="left:417.50px;top:13.66px;font-size:6.24px;color:#000;-webkit-text-stroke:0.12px #000;transform:scaleY(1.2);transform-origin:0 50%">1</div>
<div class="t" style="left:454.70px;top:13.66px;font-size:6.24px;color:#000;-webkit-text-stroke:0.12px #000;transform:scaleY(1.2);transform-origin:0 50%">3239.00</div>
<div class="t" style="left:485.20px;top:13.66px;font-size:6.24px;color:#000;-webkit-text-stroke:0.12px #000;transform:scaleY(1.2);transform-origin:0 50%">86.00</div>
<div class="t" style="left:6.00px;top:23.78px;font-size:6.24px;color:#000;-webkit-text-stroke:0.12px #000;transform:scaleY(1.2);transform-origin:0 50%">2</div>
<div class="t" style="left:24.20px;top:23.78px;font-size:6.24px;color:#000;-webkit-text-stroke:0.12px #000;transform:scaleY(1.2);transform-origin:0 50%">3</div>
<div class="t" style="left:70.10px;top:23.78px;font-size:6.24px;color:#000;-webkit-text-stroke:0.12px #000;transform:scaleY(1.2);transform-origin:0 50%">1</div>
<div class="t" style="left:111.20px;top:23.78px;font-size:6.24px;color:#000;-webkit-text-stroke:0.12px #000;transform:scaleY(1.2);transform-origin:0 50%">1</div>
<div class="t" style="left:174.80px;top:23.78px;font-size:6.24px;color:#000;-webkit-text-stroke:0.12px #000;transform:scaleY(1.2);transform-origin:0 50%">16</div>
<div class="t" style="left:231.70px;top:23.78px;font-size:6.24px;color:#000;-webkit-text-stroke:0.12px #000;transform:scaleY(1.2);transform-origin:0 50%">137</div>
<div class="t" style="left:270.80px;top:23.78px;font-size:6.24px;color:#000;-webkit-text-stroke:0.12px #000;transform:scaleY(1.2);transform-origin:0 50%">4</div>
<div class="t" style="left:318.80px;top:23.78px;font-size:6.24px;color:#000;-webkit-text-stroke:0.12px #000;transform:scaleY(1.2);transform-origin:0 50%">73.90</div>
<div class="t" style="left:372.10px;top:23.78px;font-size:6.24px;color:#000;-webkit-text-stroke:0.12px #000;transform:scaleY(1.2);transform-origin:0 50%">280.85</div>
<div class="t" style="left:417.50px;top:23.78px;font-size:6.24px;color:#000;-webkit-text-stroke:0.12px #000;transform:scaleY(1.2);transform-origin:0 50%">1</div>
<div class="t" style="left:454.70px;top:23.78px;font-size:6.24px;color:#000;-webkit-text-stroke:0.12px #000;transform:scaleY(1.2);transform-origin:0 50%">4479.00</div>
<div class="t" style="left:485.20px;top:23.78px;font-size:6.24px;color:#000;-webkit-text-stroke:0.12px #000;transform:scaleY(1.2);transform-origin:0 50%">71.00</div>
<div class="t" style="left:6.00px;top:33.90px;font-size:6.24px;color:#000;-webkit-text-stroke:0.12px #000;transform:scaleY(1.2);transform-origin:0 50%">3</div>
<div class="t" style="left:24.20px;top:33.90px;font-size:6.24px;color:#000;-webkit-text-stroke:0.12px #000;transform:scaleY(1.2);transform-origin:0 50%">4</div>
<div class="t" style="left:70.10px;top:33.90px;font-size:6.24px;color:#000;-webkit-text-stroke:0.12px #000;transform:scaleY(1.2);transform-origin:0 50%">1</div>
<div class="t" style="left:111.20px;top:33.90px;font-size:6.24px;color:#000;-webkit-text-stroke:0.12px #000;transform:scaleY(1.2);transform-origin:0 50%">1</div>
<div class="t" style="left:174.80px;top:33.90px;font-size:6.24px;color:#000;-webkit-text-stroke:0.12px #000;transform:scaleY(1.2);transform-origin:0 50%">21</div>
<div class="t" style="left:231.70px;top:33.90px;font-size:6.24px;color:#000;-webkit-text-stroke:0.12px #000;transform:scaleY(1.2);transform-origin:0 50%">156</div>
<div class="t" style="left:270.80px;top:33.90px;font-size:6.24px;color:#000;-webkit-text-stroke:0.12px #000;transform:scaleY(1.2);transform-origin:0 50%">13</div>
<div class="t" style="left:318.80px;top:33.90px;font-size:6.24px;color:#000;-webkit-text-stroke:0.12px #000;transform:scaleY(1.2);transform-origin:0 50%">98.00</div>
<div class="t" style="left:372.10px;top:33.90px;font-size:6.24px;color:#000;-webkit-text-stroke:0.12px #000;transform:scaleY(1.2);transform-origin:0 50%">1237.85</div>
<div class="t" style="left:417.50px;top:33.90px;font-size:6.24px;color:#000;-webkit-text-stroke:0.12px #000;transform:scaleY(1.2);transform-origin:0 50%">1</div>
<div class="t" style="left:454.70px;top:33.90px;font-size:6.24px;color:#000;-webkit-text-stroke:0.12px #000;transform:scaleY(1.2);transform-origin:0 50%">3714.00</div>
<div class="t" style="left:485.20px;top:33.90px;font-size:6.24px;color:#000;-webkit-text-stroke:0.12px #000;transform:scaleY(1.2);transform-origin:0 50%">99.00</div>
<div class="t" style="left:6.00px;top:44.02px;font-size:6.24px;color:#000;-webkit-text-stroke:0.12px #000;transform:scaleY(1.2);transform-origin:0 50%">4</div>
<div class="t" style="left:24.20px;top:44.02px;font-size:6.24px;color:#000;-webkit-text-stroke:0.12px #000;transform:scaleY(1.2);transform-origin:0 50%">5</div>
<div class="t" style="left:70.10px;top:44.02px;font-size:6.24px;color:#000;-webkit-text-stroke:0.12px #000;transform:scaleY(1.2);transform-origin:0 50%">1</div>
<div class="t" style="left:111.20px;top:44.02px;font-size:6.24px;color:#000;-webkit-text-stroke:0.12px #000;transform:scaleY(1.2);transform-origin:0 50%">4</div>
<div class="t" style="left:174.80px;top:44.02px;font-size:6.24px;color:#000;-webkit-text-stroke:0.12px #000;transform:scaleY(1.2);transform-origin:0 50%">7</div>
<div class="t" style="left:231.70px;top:44.02px;font-size:6.24px;color:#000;-webkit-text-stroke:0.12px #000;transform:scaleY(1.2);transform-origin:0 50%">135</div>
<div class="t" style="left:270.80px;top:44.02px;font-size:6.24px;color:#000;-webkit-text-stroke:0.12px #000;transform:scaleY(1.2);transform-origin:0 50%">3</div>
<div class="t" style="left:318.80px;top:44.02px;font-size:6.24px;color:#000;-webkit-text-stroke:0.12px #000;transform:scaleY(1.2);transform-origin:0 50%">83.90</div>
<div class="t" style="left:372.10px;top:44.02px;font-size:6.24px;color:#000;-webkit-text-stroke:0.12px #000;transform:scaleY(1.2);transform-origin:0 50%">267.40</div>
<div class="t" style="left:417.50px;top:44.02px;font-size:6.24px;color:#000;-webkit-text-stroke:0.12px #000;transform:scaleY(1.2);transform-origin:0 50%">1</div>
<div class="t" style="left:454.70px;top:44.02px;font-size:6.24px;color:#000;-webkit-text-stroke:0.12px #000;transform:scaleY(1.2);transform-origin:0 50%">3464.00</div>
<div class="t" style="left:485.20px;top:44.02px;font-size:6.24px;color:#000;-webkit-text-stroke:0.12px #000;transform:scaleY(1.2);transform-origin:0 50%">68.00</div>
<div class="t" style="left:6.00px;top:54.14px;font-size:6.24px;color:#000;-webkit-text-stroke:0.12px #000;transform:scaleY(1.2);transform-origin:0 50%">5</div>
<div class="t" style="left:24.20px;top:54.14px;font-size:6.24px;color:#000;-webkit-text-stroke:0.12px #000;transform:scaleY(1.2);transform-origin:0 50%">13</div>
<div class="t" style="left:70.10px;top:54.14px;font-size:6.24px;color:#000;-webkit-text-stroke:0.12px #000;transform:scaleY(1.2);transform-origin:0 50%">1</div>
<div class="t" style="left:111.20px;top:54.14px;font-size:6.24px;color:#000;-webkit-text-stroke:0.12px #000;transform:scaleY(1.2);transform-origin:0 50%">1</div>
<div class="t" style="left:174.80px;top:54.14px;font-size:6.24px;color:#000;-webkit-text-stroke:0.12px #000;transform:scaleY(1.2);transform-origin:0 50%">3</div>
<div class="t" style="left:231.70px;top:54.14px;font-size:6.24px;color:#000;-webkit-text-stroke:0.12px #000;transform:scaleY(1.2);transform-origin:0 50%">129</div>
<div class="t" style="left:270.80px;top:54.14px;font-size:6.24px;color:#000;-webkit-text-stroke:0.12px #000;transform:scaleY(1.2);transform-origin:0 50%">5</div>
<div class="t" style="left:318.80px;top:54.14px;font-size:6.24px;color:#000;-webkit-text-stroke:0.12px #000;transform:scaleY(1.2);transform-origin:0 50%">68.95</div>
<div class="t" style="left:372.10px;top:54.14px;font-size:6.24px;color:#000;-webkit-text-stroke:0.12px #000;transform:scaleY(1.2);transform-origin:0 50%">351.50</div>
<div class="t" style="left:417.50px;top:54.14px;font-size:6.24px;color:#000;-webkit-text-stroke:0.12px #000;transform:scaleY(1.2);transform-origin:0 50%">0</div>
<div class="t" style="left:454.70px;top:54.14px;font-size:6.24px;color:#000;-webkit-text-stroke:0.12px #000;transform:scaleY(1.2);transform-origin:0 50%">5536.00</div>
<div class="t" style="left:485.20px;top:54.14px;font-size:6.24px;color:#000;-webkit-text-stroke:0.12px #000;transform:scaleY(1.2);transform-origin:0 50%">57.00</div>
<div class="t" style="left:6.00px;top:64.26px;font-size:6.24px;color:#000;-webkit-text-stroke:0.12px #000;transform:scaleY(1.2);transform-origin:0 50%">6</div>
<div class="t" style="left:24.20px;top:64.26px;font-size:6.24px;color:#000;-webkit-text-stroke:0.12px #000;transform:scaleY(1.2);transform-origin:0 50%">2938</div>
<div class="t" style="left:70.10px;top:64.26px;font-size:6.24px;color:#000;-webkit-text-stroke:0.12px #000;transform:scaleY(1.2);transform-origin:0 50%">1</div>
<div class="t" style="left:111.20px;top:64.26px;font-size:6.24px;color:#000;-webkit-text-stroke:0.12px #000;transform:scaleY(1.2);transform-origin:0 50%">2</div>
<div class="t" style="left:174.80px;top:64.26px;font-size:6.24px;color:#000;-webkit-text-stroke:0.12px #000;transform:scaleY(1.2);transform-origin:0 50%">20</div>
<div class="t" style="left:231.70px;top:64.26px;font-size:6.24px;color:#000;-webkit-text-stroke:0.12px #000;transform:scaleY(1.2);transform-origin:0 50%">77</div>
<div class="t" style="left:270.80px;top:64.26px;font-size:6.24px;color:#000;-webkit-text-stroke:0.12px #000;transform:scaleY(1.2);transform-origin:0 50%">10</div>
<div class="t" style="left:318.80px;top:64.26px;font-size:6.24px;color:#000;-webkit-text-stroke:0.12px #000;transform:scaleY(1.2);transform-origin:0 50%">55.20</div>
<div class="t" style="left:372.10px;top:64.26px;font-size:6.24px;color:#000;-webkit-text-stroke:0.12px #000;transform:scaleY(1.2);transform-origin:0 50%">528.35</div>
<div class="t" style="left:417.50px;top:64.26px;font-size:6.24px;color:#000;-webkit-text-stroke:0.12px #000;transform:scaleY(1.2);transform-origin:0 50%">1</div>
<div class="t" style="left:454.70px;top:64.26px;font-size:6.24px;color:#000;-webkit-text-stroke:0.12px #000;transform:scaleY(1.2);transform-origin:0 50%">5925.00</div>
<div class="t" style="left:485.20px;top:64.26px;font-size:6.24px;color:#000;-webkit-text-stroke:0.12px #000;transform:scaleY(1.2);transform-origin:0 50%">78.00</div>
<div class="t" style="left:6.00px;top:74.38px;font-size:6.24px;color:#000;-webkit-text-stroke:0.12px #000;transform:scaleY(1.2);transform-origin:0 50%">7</div>
<div class="t" style="left:24.20px;top:74.38px;font-size:6.24px;color:#000;-webkit-text-stroke:0.12px #000;transform:scaleY(1.2);transform-origin:0 50%">6208</div>
<div class="t" style="left:70.10px;top:74.38px;font-size:6.24px;color:#000;-webkit-text-stroke:0.12px #000;transform:scaleY(1.2);transform-origin:0 50%">1</div>
<div class="t" style="left:111.20px;top:74.38px;font-size:6.24px;color:#000;-webkit-text-stroke:0.12px #000;transform:scaleY(1.2);transform-origin:0 50%">1</div>
<div class="t" style="left:174.80px;top:74.38px;font-size:6.24px;color:#000;-webkit-text-stroke:0.12px #000;transform:scaleY(1.2);transform-origin:0 50%">5</div>
<div class="t" style="left:231.70px;top:74.38px;font-size:6.24px;color:#000;-webkit-text-stroke:0.12px #000;transform:scaleY(1.2);transform-origin:0 50%">10</div>
<div class="t" style="left:270.80px;top:74.38px;font-size:6.24px;color:#000;-webkit-text-stroke:0.12px #000;transform:scaleY(1.2);transform-origin:0 50%">1</div>
<div class="t" style="left:318.80px;top:74.38px;font-size:6.24px;color:#000;-webkit-text-stroke:0.12px #000;transform:scaleY(1.2);transform-origin:0 50%">39.65</div>
<div class="t" style="left:372.10px;top:74.38px;font-size:6.24px;color:#000;-webkit-text-stroke:0.12px #000;transform:scaleY(1.2);transform-origin:0 50%">39.65</div>
<div class="t" style="left:417.50px;top:74.38px;font-size:6.24px;color:#000;-webkit-text-stroke:0.12px #000;transform:scaleY(1.2);transform-origin:0 50%">1</div>
<div class="t" style="left:454.70px;top:74.38px;font-size:6.24px;color:#000;-webkit-text-stroke:0.12px #000;transform:scaleY(1.2);transform-origin:0 50%">5433.00</div>
<div class="t" style="left:485.20px;top:74.38px;font-size:6.24px;color:#000;-webkit-text-stroke:0.12px #000;transform:scaleY(1.2);transform-origin:0 50%">100.00</div>
<div class="t" style="left:6.00px;top:84.50px;font-size:6.24px;color:#000;-webkit-text-stroke:0.12px #000;transform:scaleY(1.2);transform-origin:0 50%">8</div>
<div class="t" style="left:24.20px;top:84.50px;font-size:6.24px;color:#000;-webkit-text-stroke:0.12px #000;transform:scaleY(1.2);transform-origin:0 50%">724</div>
<div class="t" style="left:70.10px;top:84.50px;font-size:6.24px;color:#000;-webkit-text-stroke:0.12px #000;transform:scaleY(1.2);transform-origin:0 50%">1</div>
<div class="t" style="left:111.20px;top:84.50px;font-size:6.24px;color:#000;-webkit-text-stroke:0.12px #000;transform:scaleY(1.2);transform-origin:0 50%">4</div>
<div class="t" style="left:174.80px;top:84.50px;font-size:6.24px;color:#000;-webkit-text-stroke:0.12px #000;transform:scaleY(1.2);transform-origin:0 50%">18</div>
<div class="t" style="left:231.70px;top:84.50px;font-size:6.24px;color:#000;-webkit-text-stroke:0.12px #000;transform:scaleY(1.2);transform-origin:0 50%">193</div>
<div class="t" style="left:270.80px;top:84.50px;font-size:6.24px;color:#000;-webkit-text-stroke:0.12px #000;transform:scaleY(1.2);transform-origin:0 50%">1</div>
<div class="t" style="left:318.80px;top:84.50px;font-size:6.24px;color:#000;-webkit-text-stroke:0.12px #000;transform:scaleY(1.2);transform-origin:0 50%">20.15</div>
<div class="t" style="left:372.10px;top:84.50px;font-size:6.24px;color:#000;-webkit-text-stroke:0.12px #000;transform:scaleY(1.2);transform-origin:0 50%">20.15</div>
<div class="t" style="left:417.50px;top:84.50px;font-size:6.24px;color:#000;-webkit-text-stroke:0.12px #000;transform:scaleY(1.2);transform-origin:0 50%">1</div>
<div class="t" style="left:454.70px;top:84.50px;font-size:6.24px;color:#000;-webkit-text-stroke:0.12px #000;transform:scaleY(1.2);transform-origin:0 50%">4832.00</div>
<div class="t" style="left:485.20px;top:84.50px;font-size:6.24px;color:#000;-webkit-text-stroke:0.12px #000;transform:scaleY(1.2);transform-origin:0 50%">92.00</div>
<div class="t" style="left:6.00px;top:94.62px;font-size:6.24px;color:#000;-webkit-text-stroke:0.12px #000;transform:scaleY(1.2);transform-origin:0 50%">9</div>
<div class="t" style="left:24.20px;top:94.62px;font-size:6.24px;color:#000;-webkit-text-stroke:0.12px #000;transform:scaleY(1.2);transform-origin:0 50%">18</div>
<div class="t" style="left:70.10px;top:94.62px;font-size:6.24px;color:#000;-webkit-text-stroke:0.12px #000;transform:scaleY(1.2);transform-origin:0 50%">1</div>
<div class="t" style="left:111.20px;top:94.62px;font-size:6.24px;color:#000;-webkit-text-stroke:0.12px #000;transform:scaleY(1.2);transform-origin:0 50%">1</div>
<div class="t" style="left:174.80px;top:94.62px;font-size:6.24px;color:#000;-webkit-text-stroke:0.12px #000;transform:scaleY(1.2);transform-origin:0 50%">3</div>
<div class="t" style="left:231.70px;top:94.62px;font-size:6.24px;color:#000;-webkit-text-stroke:0.12px #000;transform:scaleY(1.2);transform-origin:0 50%">258</div>
<div class="t" style="left:270.80px;top:94.62px;font-size:6.24px;color:#000;-webkit-text-stroke:0.12px #000;transform:scaleY(1.2);transform-origin:0 50%">1</div>
<div class="t" style="left:318.80px;top:94.62px;font-size:6.24px;color:#000;-webkit-text-stroke:0.12px #000;transform:scaleY(1.2);transform-origin:0 50%">72.10</div>
<div class="t" style="left:372.10px;top:94.62px;font-size:6.24px;color:#000;-webkit-text-stroke:0.12px #000;transform:scaleY(1.2);transform-origin:0 50%">72.10</div>
<div class="t" style="left:417.50px;top:94.62px;font-size:6.24px;color:#000;-webkit-text-stroke:0.12px #000;transform:scaleY(1.2);transform-origin:0 50%">0</div>
<div class="t" style="left:454.70px;top:94.62px;font-size:6.24px;color:#000;-webkit-text-stroke:0.12px #000;transform:scaleY(1.2);transform-origin:0 50%">4432.00</div>
<div class="t" style="left:485.20px;top:94.62px;font-size:6.24px;color:#000;-webkit-text-stroke:0.12px #000;transform:scaleY(1.2);transform-origin:0 50%">50.00</div>
<div class="t" style="left:6.00px;top:104.74px;font-size:6.24px;color:#000;-webkit-text-stroke:0.12px #000;transform:scaleY(1.2);transform-origin:0 50%">10</div>
<div class="t" style="left:24.20px;top:104.74px;font-size:6.24px;color:#000;-webkit-text-stroke:0.12px #000;transform:scaleY(1.2);transform-origin:0 50%">6120</div>
<div class="t" style="left:70.10px;top:104.74px;font-size:6.24px;color:#000;-webkit-text-stroke:0.12px #000;transform:scaleY(1.2);transform-origin:0 50%">1</div>
<div class="t" style="left:111.20px;top:104.74px;font-size:6.24px;color:#000;-webkit-text-stroke:0.12px #000;transform:scaleY(1.2);transform-origin:0 50%">1</div>
<div class="t" style="left:174.80px;top:104.74px;font-size:6.24px;color:#000;-webkit-text-stroke:0.12px #000;transform:scaleY(1.2);transform-origin:0 50%">9</div>
<div class="t" style="left:231.70px;top:104.74px;font-size:6.24px;color:#000;-webkit-text-stroke:0.12px #000;transform:scaleY(1.2);transform-origin:0 50%">17</div>
<div class="t" style="left:270.80px;top:104.74px;font-size:6.24px;color:#000;-webkit-text-stroke:0.12px #000;transform:scaleY(1.2);transform-origin:0 50%">1</div>
<div class="t" style="left:318.80px;top:104.74px;font-size:6.24px;color:#000;-webkit-text-stroke:0.12px #000;transform:scaleY(1.2);transform-origin:0 50%">30.20</div>
<div class="t" style="left:372.10px;top:104.74px;font-size:6.24px;color:#000;-webkit-text-stroke:0.12px #000;transform:scaleY(1.2);transform-origin:0 50%">30.20</div>
<div class="t" style="left:417.50px;top:104.74px;font-size:6.24px;color:#000;-webkit-text-stroke:0.12px #000;transform:scaleY(1.2);transform-origin:0 50%">1</div>
<div class="t" style="left:454.70px;top:104.74px;font-size:6.24px;color:#000;-webkit-text-stroke:0.12px #000;transform:scaleY(1.2);transform-origin:0 50%">2915.00</div>
<div class="t" style="left:485.20px;top:104.74px;font-size:6.24px;color:#000;-webkit-text-stroke:0.12px #000;transform:scaleY(1.2);transform-origin:0 50%">97.00</div>
<div class="t" style="left:6.00px;top:114.86px;font-size:6.24px;color:#000;-webkit-text-stroke:0.12px #000;transform:scaleY(1.2);transform-origin:0 50%">11</div>
<div class="t" style="left:24.20px;top:114.86px;font-size:6.24px;color:#000;-webkit-text-stroke:0.12px #000;transform:scaleY(1.2);transform-origin:0 50%">6200</div>
<div class="t" style="left:70.10px;top:114.86px;font-size:6.24px;color:#000;-webkit-text-stroke:0.12px #000;transform:scaleY(1.2);transform-origin:0 50%">1</div>
<div class="t" style="left:111.20px;top:114.86px;font-size:6.24px;color:#000;-webkit-text-stroke:0.12px #000;transform:scaleY(1.2);transform-origin:0 50%">4</div>
<div class="t" style="left:174.80px;top:114.86px;font-size:6.24px;color:#000;-webkit-text-stroke:0.12px #000;transform:scaleY(1.2);transform-origin:0 50%">20</div>
<div class="t" style="left:231.70px;top:114.86px;font-size:6.24px;color:#000;-webkit-text-stroke:0.12px #000;transform:scaleY(1.2);transform-origin:0 50%">68</div>
<div class="t" style="left:270.80px;top:114.86px;font-size:6.24px;color:#000;-webkit-text-stroke:0.12px #000;transform:scaleY(1.2);transform-origin:0 50%">17</div>
<div class="t" style="left:318.80px;top:114.86px;font-size:6.24px;color:#000;-webkit-text-stroke:0.12px #000;transform:scaleY(1.2);transform-origin:0 50%">64.70</div>
<div class="t" style="left:372.10px;top:114.86px;font-size:6.24px;color:#000;-webkit-text-stroke:0.12px #000;transform:scaleY(1.2);transform-origin:0 50%">1093.10</div>
<div class="t" style="left:417.50px;top:114.86px;font-size:6.24px;color:#000;-webkit-text-stroke:0.12px #000;transform:scaleY(1.2);transform-origin:0 50%">1</div>
<div class="t" style="left:454.70px;top:114.86px;font-size:6.24px;color:#000;-webkit-text-stroke:0.12px #000;transform:scaleY(1.2);transform-origin:0 50%">3022.00</div>
<div class="t" style="left:485.20px;top:114.86px;font-size:6.24px;color:#000;-webkit-text-stroke:0.12px #000;transform:scaleY(1.2);transform-origin:0 50%">74.00</div>
<div class="t" style="left:6.00px;top:124.98px;font-size:6.24px;color:#000;-webkit-text-stroke:0.12px #000;transform:scaleY(1.2);transform-origin:0 50%">12</div>
<div class="t" style="left:24.20px;top:124.98px;font-size:6.24px;color:#000;-webkit-text-stroke:0.12px #000;transform:scaleY(1.2);transform-origin:0 50%">22</div>
<div class="t" style="left:70.10px;top:124.98px;font-size:6.24px;color:#000;-webkit-text-stroke:0.12px #000;transform:scaleY(1.2);transform-origin:0 50%">1</div>
<div class="t" style="left:111.20px;top:124.98px;font-size:6.24px;color:#000;-webkit-text-stroke:0.12px #000;transform:scaleY(1.2);transform-origin:0 50%">1</div>
<div class="t" style="left:174.80px;top:124.98px;font-size:6.24px;color:#000;-webkit-text-stroke:0.12px #000;transform:scaleY(1.2);transform-origin:0 50%">8</div>
<div class="t" style="left:231.70px;top:124.98px;font-size:6.24px;color:#000;-webkit-text-stroke:0.12px #000;transform:scaleY(1.2);transform-origin:0 50%">284</div>
<div class="t" style="left:270.80px;top:124.98px;font-size:6.24px;color:#000;-webkit-text-stroke:0.12px #000;transform:scaleY(1.2);transform-origin:0 50%">13</div>
<div class="t" style="left:318.80px;top:124.98px;font-size:6.24px;color:#000;-webkit-text-stroke:0.12px #000;transform:scaleY(1.2);transform-origin:0 50%">94.10</div>
<div class="t" style="left:372.10px;top:124.98px;font-size:6.24px;color:#000;-webkit-text-stroke:0.12px #000;transform:scaleY(1.2);transform-origin:0 50%">1215.60</div>
<div class="t" style="left:417.50px;top:124.98px;font-size:6.24px;color:#000;-webkit-text-stroke:0.12px #000;transform:scaleY(1.2);transform-origin:0 50%">1</div>
<div class="t" style="left:454.70px;top:124.98px;font-size:6.24px;color:#000;-webkit-text-stroke:0.12px #000;transform:scaleY(1.2);transform-origin:0 50%">2973.00</div>
<div class="t" style="left:485.20px;top:124.98px;font-size:6.24px;color:#000;-webkit-text-stroke:0.12px #000;transform:scaleY(1.2);transform-origin:0 50%">75.00</div>
<div class="t" style="left:6.00px;top:135.10px;font-size:6.24px;color:#000;-webkit-text-stroke:0.12px #000;transform:scaleY(1.2);transform-origin:0 50%">13</div>
<div class="t" style="left:24.20px;top:135.10px;font-size:6.24px;color:#000;-webkit-text-stroke:0.12px #000;transform:scaleY(1.2);transform-origin:0 50%">23</div>
<div class="t" style="left:70.10px;top:135.10px;font-size:6.24px;color:#000;-webkit-text-stroke:0.12px #000;transform:scaleY(1.2);transform-origin:0 50%">1</div>
<div class="t" style="left:111.20px;top:135.10px;font-size:6.24px;color:#000;-webkit-text-stroke:0.12px #000;transform:scaleY(1.2);transform-origin:0 50%">1</div>
<div class="t" style="left:174.80px;top:135.10px;font-size:6.24px;color:#000;-webkit-text-stroke:0.12px #000;transform:scaleY(1.2);transform-origin:0 50%">3</div>
<div class="t" style="left:231.70px;top:135.10px;font-size:6.24px;color:#000;-webkit-text-stroke:0.12px #000;transform:scaleY(1.2);transform-origin:0 50%">260</div>
<div class="t" style="left:270.80px;top:135.10px;font-size:6.24px;color:#000;-webkit-text-stroke:0.12px #000;transform:scaleY(1.2);transform-origin:0 50%">23</div>
<div class="t" style="left:318.80px;top:135.10px;font-size:6.24px;color:#000;-webkit-text-stroke:0.12px #000;transform:scaleY(1.2);transform-origin:0 50%">83.75</div>
<div class="t" style="left:372.10px;top:135.10px;font-size:6.24px;color:#000;-webkit-text-stroke:0.12px #000;transform:scaleY(1.2);transform-origin:0 50%">1849.95</div>
<div class="t" style="left:417.50px;top:135.10px;font-size:6.24px;color:#000;-webkit-text-stroke:0.12px #000;transform:scaleY(1.2);transform-origin:0 50%">0</div>
<div class="t" style="left:454.70px;top:135.10px;font-size:6.24px;color:#000;-webkit-text-stroke:0.12px #000;transform:scaleY(1.2);transform-origin:0 50%">3585.00</div>
<div class="t" style="left:485.20px;top:135.10px;font-size:6.24px;color:#000;-webkit-text-stroke:0.12px #000;transform:scaleY(1.2);transform-origin:0 50%">78.00</div>
<div class="t" style="left:6.00px;top:145.22px;font-size:6.24px;color:#000;-webkit-text-stroke:0.12px #000;transform:scaleY(1.2);transform-origin:0 50%">14</div>
<div class="t" style="left:24.20px;top:145.22px;font-size:6.24px;color:#000;-webkit-text-stroke:0.12px #000;transform:scaleY(1.2);transform-origin:0 50%">37</div>
<div class="t" style="left:70.10px;top:145.22px;font-size:6.24px;color:#000;-webkit-text-stroke:0.12px #000;transform:scaleY(1.2);transform-origin:0 50%">1</div>
<div class="t" style="left:111.20px;top:145.22px;font-size:6.24px;color:#000;-webkit-text-stroke:0.12px #000;transform:scaleY(1.2);transform-origin:0 50%">3</div>
<div class="t" style="left:174.80px;top:145.22px;font-size:6.24px;color:#000;-webkit-text-stroke:0.12px #000;transform:scaleY(1.2);transform-origin:0 50%">3</div>
<div class="t" style="left:231.70px;top:145.22px;font-size:6.24px;color:#000;-webkit-text-stroke:0.12px #000;transform:scaleY(1.2);transform-origin:0 50%">292</div>
<div class="t" style="left:270.80px;top:145.22px;font-size:6.24px;color:#000;-webkit-text-stroke:0.12px #000;transform:scaleY(1.2);transform-origin:0 50%">55</div>
<div class="t" style="left:318.80px;top:145.22px;font-size:6.24px;color:#000;-webkit-text-stroke:0.12px #000;transform:scaleY(1.2);transform-origin:0 50%">89.80</div>
<div class="t" style="left:372.10px;top:145.22px;font-size:6.24px;color:#000;-webkit-text-stroke:0.12px #000;transform:scaleY(1.2);transform-origin:0 50%">4959.60</div>
<div class="t" style="left:417.50px;top:145.22px;font-size:6.24px;color:#000;-webkit-text-stroke:0.12px #000;transform:scaleY(1.2);transform-origin:0 50%">0</div>
<div class="t" style="left:454.70px;top:145.22px;font-size:6.24px;color:#000;-webkit-text-stroke:0.12px #000;transform:scaleY(1.2);transform-origin:0 50%">5875.00</div>
<div class="t" style="left:485.20px;top:145.22px;font-size:6.24px;color:#000;-webkit-text-stroke:0.12px #000;transform:scaleY(1.2);transform-origin:0 50%">42.00</div>
<div class="t" style="left:6.00px;top:155.34px;font-size:6.24px;color:#000;-webkit-text-stroke:0.12px #000;transform:scaleY(1.2);transform-origin:0 50%">15</div>
<div class="t" style="left:24.20px;top:155.34px;font-size:6.24px;color:#000;-webkit-text-stroke:0.12px #000;transform:scaleY(1.2);transform-origin:0 50%">38</div>
<div class="t" style="left:70.10px;top:155.34px;font-size:6.24px;color:#000;-webkit-text-stroke:0.12px #000;transform:scaleY(1.2);transform-origin:0 50%">1</div>
<div class="t" style="left:111.20px;top:155.34px;font-size:6.24px;color:#000;-webkit-text-stroke:0.12px #000;transform:scaleY(1.2);transform-origin:0 50%">1</div>
<div class="t" style="left:174.80px;top:155.34px;font-size:6.24px;color:#000;-webkit-text-stroke:0.12px #000;transform:scaleY(1.2);transform-origin:0 50%">3</div>
<div class="t" style="left:231.70px;top:155.34px;font-size:6.24px;color:#000;-webkit-text-stroke:0.12px #000;transform:scaleY(1.2);transform-origin:0 50%">308</div>
<div class="t" style="left:270.80px;top:155.34px;font-size:6.24px;color:#000;-webkit-text-stroke:0.12px #000;transform:scaleY(1.2);transform-origin:0 50%">59</div>
<div class="t" style="left:318.80px;top:155.34px;font-size:6.24px;color:#000;-webkit-text-stroke:0.12px #000;transform:scaleY(1.2);transform-origin:0 50%">94.75</div>
<div class="t" style="left:372.10px;top:155.34px;font-size:6.24px;color:#000;-webkit-text-stroke:0.12px #000;transform:scaleY(1.2);transform-origin:0 50%">5597.65</div>
<div class="t" style="left:417.50px;top:155.34px;font-size:6.24px;color:#000;-webkit-text-stroke:0.12px #000;transform:scaleY(1.2);transform-origin:0 50%">0</div>
<div class="t" style="left:454.70px;top:155.34px;font-size:6.24px;color:#000;-webkit-text-stroke:0.12px #000;transform:scaleY(1.2);transform-origin:0 50%">5238.00</div>
<div class="t" style="left:485.20px;top:155.34px;font-size:6.24px;color:#000;-webkit-text-stroke:0.12px #000;transform:scaleY(1.2);transform-origin:0 50%">26.00</div>
<div class="t" style="left:6.00px;top:165.46px;font-size:6.24px;color:#000;-webkit-text-stroke:0.12px #000;transform:scaleY(1.2);transform-origin:0 50%">16</div>
<div class="t" style="left:24.20px;top:165.46px;font-size:6.24px;color:#000;-webkit-text-stroke:0.12px #000;transform:scaleY(1.2);transform-origin:0 50%">40</div>
<div class="t" style="left:70.10px;top:165.46px;font-size:6.24px;color:#000;-webkit-text-stroke:0.12px #000;transform:scaleY(1.2);transform-origin:0 50%">1</div>
<div class="t" style="left:111.20px;top:165.46px;font-size:6.24px;color:#000;-webkit-text-stroke:0.12px #000;transform:scaleY(1.2);transform-origin:0 50%">3</div>
<div class="t" style="left:174.80px;top:165.46px;font-size:6.24px;color:#000;-webkit-text-stroke:0.12px #000;transform:scaleY(1.2);transform-origin:0 50%">3</div>
<div class="t" style="left:231.70px;top:165.46px;font-size:6.24px;color:#000;-webkit-text-stroke:0.12px #000;transform:scaleY(1.2);transform-origin:0 50%">258</div>
<div class="t" style="left:270.80px;top:165.46px;font-size:6.24px;color:#000;-webkit-text-stroke:0.12px #000;transform:scaleY(1.2);transform-origin:0 50%">27</div>
<div class="t" style="left:318.80px;top:165.46px;font-size:6.24px;color:#000;-webkit-text-stroke:0.12px #000;transform:scaleY(1.2);transform-origin:0 50%">75.75</div>
<div class="t" style="left:372.10px;top:165.46px;font-size:6.24px;color:#000;-webkit-text-stroke:0.12px #000;transform:scaleY(1.2);transform-origin:0 50%">1929.00</div>
<div class="t" style="left:417.50px;top:165.46px;font-size:6.24px;color:#000;-webkit-text-stroke:0.12px #000;transform:scaleY(1.2);transform-origin:0 50%">0</div>
<div class="t" style="left:454.70px;top:165.46px;font-size:6.24px;color:#000;-webkit-text-stroke:0.12px #000;transform:scaleY(1.2);transform-origin:0 50%">4994.00</div>
<div class="t" style="left:485.20px;top:165.46px;font-size:6.24px;color:#000;-webkit-text-stroke:0.12px #000;transform:scaleY(1.2);transform-origin:0 50%">46.00</div>
<div class="t" style="left:6.00px;top:175.58px;font-size:6.24px;color:#000;-webkit-text-stroke:0.12px #000;transform:scaleY(1.2);transform-origin:0 50%">17</div>
<div class="t" style="left:24.20px;top:175.58px;font-size:6.24px;color:#000;-webkit-text-stroke:0.12px #000;transform:scaleY(1.2);transform-origin:0 50%">50</div>
<div class="t" style="left:70.10px;top:175.58px;font-size:6.24px;color:#000;-webkit-text-stroke:0.12px #000;transform:scaleY(1.2);transform-origin:0 50%">1</div>
<div class="t" style="left:111.20px;top:175.58px;font-size:6.24px;color:#000;-webkit-text-stroke:0.12px #000;transform:scaleY(1.2);transform-origin:0 50%">1</div>
<div class="t" style="left:174.80px;top:175.58px;font-size:6.24px;color:#000;-webkit-text-stroke:0.12px #000;transform:scaleY(1.2);transform-origin:0 50%">3</div>
<div class="t" style="left:231.70px;top:175.58px;font-size:6.24px;color:#000;-webkit-text-stroke:0.12px #000;transform:scaleY(1.2);transform-origin:0 50%">136</div>
<div class="t" style="left:270.80px;top:175.58px;font-size:6.24px;color:#000;-webkit-text-stroke:0.12px #000;transform:scaleY(1.2);transform-origin:0 50%">29</div>
<div class="t" style="left:318.80px;top:175.58px;font-size:6.24px;color:#000;-webkit-text-stroke:0.12px #000;transform:scaleY(1.2);transform-origin:0 50%">94.20</div>
<div class="t" style="left:372.10px;top:175.58px;font-size:6.24px;color:#000;-webkit-text-stroke:0.12px #000;transform:scaleY(1.2);transform-origin:0 50%">2607.60</div>
<div class="t" style="left:417.50px;top:175.58px;font-size:6.24px;color:#000;-webkit-text-stroke:0.12px #000;transform:scaleY(1.2);transform-origin:0 50%">0</div>
<div class="t" style="left:454.70px;top:175.58px;font-size:6.24px;color:#000;-webkit-text-stroke:0.12px #000;transform:scaleY(1.2);transform-origin:0 50%">4561.00</div>
<div class="t" style="left:485.20px;top:175.58px;font-size:6.24px;color:#000;-webkit-text-stroke:0.12px #000;transform:scaleY(1.2);transform-origin:0 50%">60.00</div>
</div>
<div class="ab" style="left:965.2px;top:287.4px;width:9.8px;height:181px;background:#e8e8ec"></div>
<div class="ab" style="left:975px;top:287.4px;width:2px;height:181px;background:#dcdce2"></div>
<svg class="ab" style="left:965.2px;top:287px" width="10" height="183" viewBox="0 0 10 183"><path d="M2.4 7.6h5.2l-2.6-2.8z" fill="#4a4a55"/><rect x="2.8" y="11.2" width="5" height="12" fill="#c6c7cd"/><path d="M2.4 174.8h5.2l-2.6 2.8z" fill="#4a4a55"/></svg>
<div class="ab" style="left:176px;top:469.8px;width:802px;height:13.8px;background:#ede38c;border-top:1.5px solid #fdfcf4;box-shadow:inset 0 1.2px 0 #e8dc72, inset 0 -1.6px 0 #e8dc72"></div>
<svg class="ab" style="left:176px;top:470px" width="802" height="14" viewBox="0 0 802 14"><circle cx="5.4" cy="8" r="3.6" fill="#1a7d24"/><path d="M3.7 8l1.3 1.5 2.4-3" stroke="#fff" stroke-width="1.1" fill="none"/><rect x="440.2" y="6.8" width="5.6" height="4.8" rx="0.5" fill="#222"/><path d="M441.5 6.8v-1.4a1.5 1.5 0 0 1 3 0v1.4" stroke="#222" stroke-width="1" fill="none"/></svg>
<div class="ab" style="left:176px;top:467.9px;width:790px;height:2.2px;background:#dcdde3"></div>
<div class="t" style="left:188.2px;top:474.6px;font-size:7.1px;color:#000;-webkit-text-stroke:0.15px #000;transform:scaleY(1.12);transform-origin:0 50%">Query executed successfully.</div>
<div class="ab" style="left:612.4px;top:472px;width:0.8px;height:10px;background:#d4c87a"></div>
<div class="ab" style="left:760px;top:472px;width:0.8px;height:10px;background:#d4c87a"></div>
<div class="ab" style="left:866px;top:472px;width:0.8px;height:10px;background:#d4c87a"></div>
<div class="ab" style="left:893px;top:472px;width:0.8px;height:10px;background:#d4c87a"></div>
<div class="ab" style="left:928px;top:472px;width:0.8px;height:10px;background:#d4c87a"></div>
<div class="t" style="left:626px;top:474.6px;font-size:7.06px;color:#000;-webkit-text-stroke:0.15px #000;transform:scaleY(1.12);transform-origin:0 50%">AHMED-ANWAR\MSSQLSERVER2022...</div>
<div class="t" style="left:764px;top:474.6px;font-size:7.45px;color:#000;-webkit-text-stroke:0.15px #000;transform:scaleY(1.12);transform-origin:0 50%">AHMED-ANWAR\ahmed (52)</div>
<div class="t" style="left:870px;top:474.6px;font-size:7.1px;color:#000;-webkit-text-stroke:0.15px #000;transform:scaleY(1.12);transform-origin:0 50%">churn</div>
<div class="t" style="left:896px;top:474.6px;font-size:6.95px;color:#000;-webkit-text-stroke:0.15px #000;transform:scaleY(1.12);transform-origin:0 50%">00:00:00</div>
<div class="t" style="left:931px;top:474.6px;font-size:7.1px;color:#000;-webkit-text-stroke:0.15px #000;transform:scaleY(1.12);transform-origin:0 50%">7,043 rows</div>
</body></html>
